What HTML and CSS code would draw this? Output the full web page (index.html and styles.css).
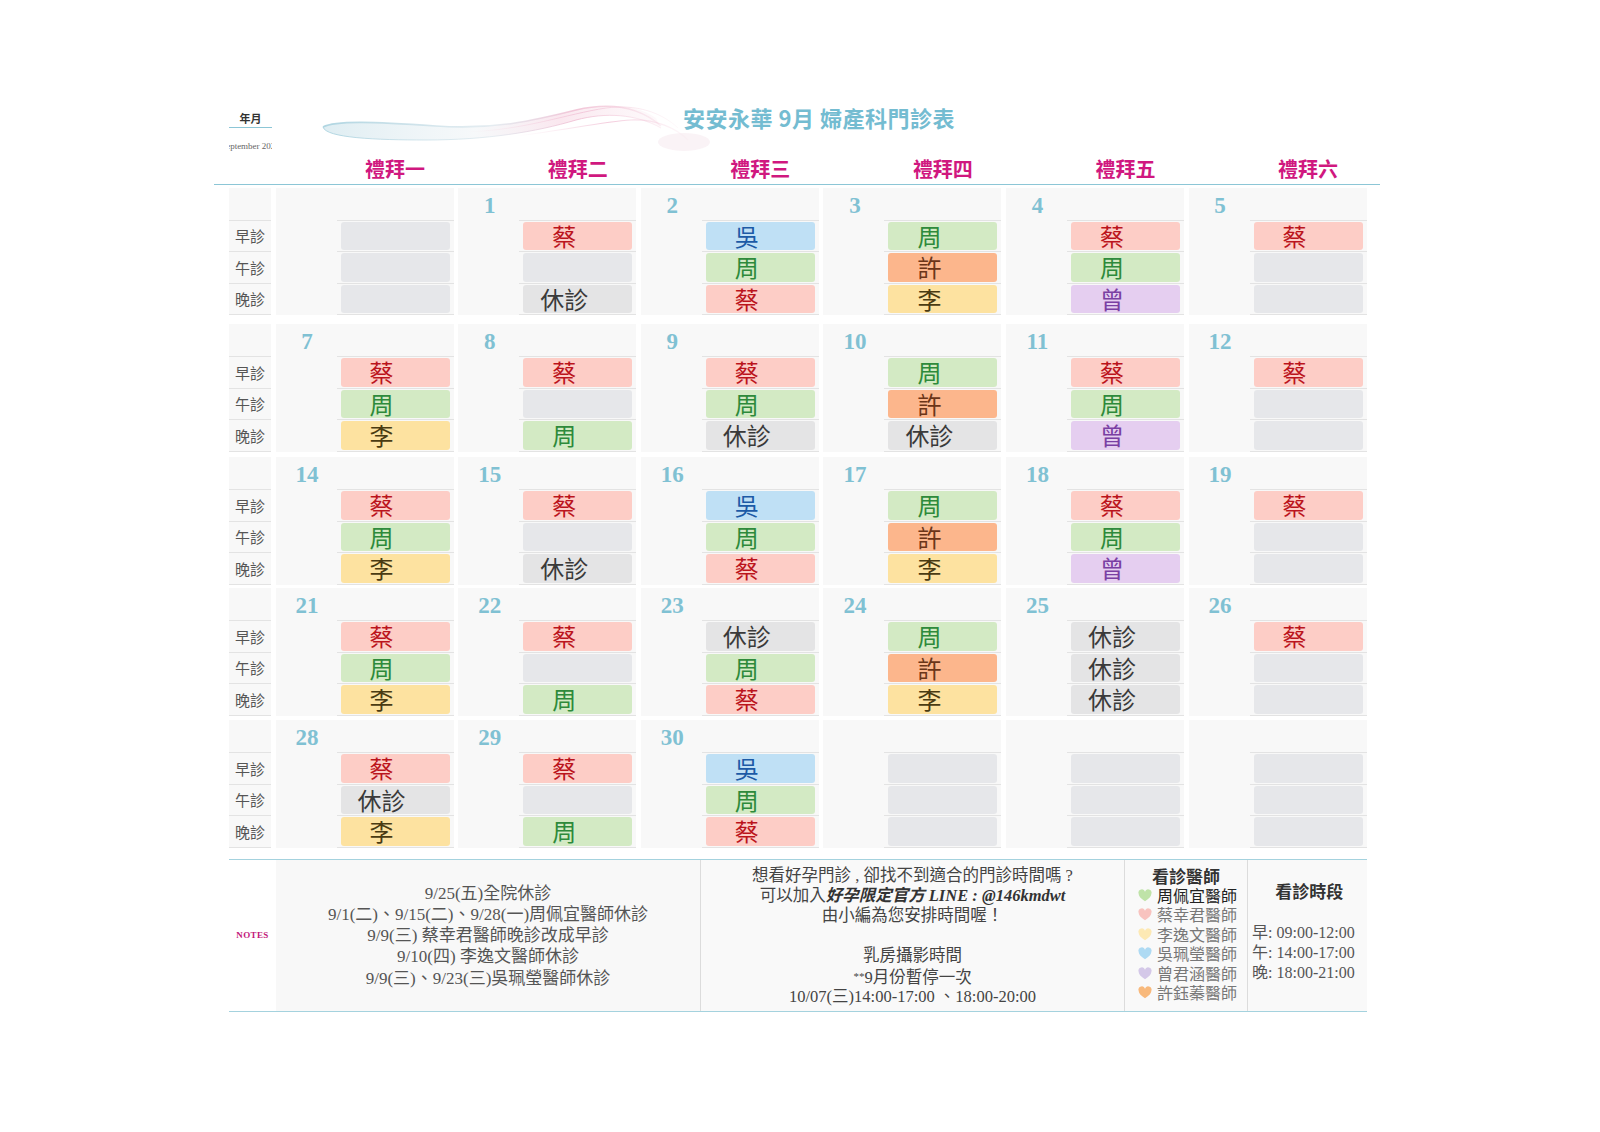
FILE: index.html
```html
<!DOCTYPE html>
<html lang="zh-Hant">
<head>
<meta charset="utf-8">
<title>安安永華 9月 婦產科門診表</title>
<link rel="stylesheet" href="styles.css">
</head>
<body>
<div class="sheet">
  <div class="top">
    <svg class="swoosh" viewBox="0 0 400 60" width="400" height="60" aria-hidden="true">
      <defs>
        <linearGradient id="gf" x1="0" x2="1" y1="0" y2="0">
          <stop offset="0" stop-color="#c4dfe8" stop-opacity="0.55"/>
          <stop offset="0.45" stop-color="#e6edf1" stop-opacity="0.35"/>
          <stop offset="0.7" stop-color="#f4cadb" stop-opacity="0.45"/>
          <stop offset="1" stop-color="#f6dbe6" stop-opacity="0.15"/>
        </linearGradient>
        <linearGradient id="gt" x1="0" x2="1" y1="0" y2="0">
          <stop offset="0" stop-color="#a9d2df" stop-opacity="0.9"/>
          <stop offset="0.5" stop-color="#dbe6ec" stop-opacity="0.7"/>
          <stop offset="0.75" stop-color="#efb9cf" stop-opacity="0.8"/>
          <stop offset="1" stop-color="#f3cfdd" stop-opacity="0.3"/>
        </linearGradient>
        <linearGradient id="gp" x1="0" x2="1" y1="0" y2="0">
          <stop offset="0" stop-color="#f6d7e3" stop-opacity="0"/>
          <stop offset="0.55" stop-color="#f0bcd2" stop-opacity="0.75"/>
          <stop offset="1" stop-color="#f6d7e3" stop-opacity="0.15"/>
        </linearGradient>
      </defs>
      <path d="M7 29 C20 22 60 24 120 28 C180 32 220 22 260 12 C290 5 320 6 340 20 L345 30 C320 16 290 14 260 22 C220 34 170 42 110 42 C60 42 10 40 7 29 Z" fill="url(#gf)"/>
      <path d="M7 29 C20 22 60 24 120 28 C180 32 220 22 260 12 C290 5 320 6 345 28" fill="none" stroke="url(#gt)" stroke-width="1.6"/>
      <path d="M7 29 C10 40 60 42 110 42 C170 42 220 34 260 22 C290 14 320 16 345 30" fill="none" stroke="url(#gt)" stroke-width="1"/>
      <path d="M150 34 C210 32 250 16 290 10 C320 6 345 14 362 30" fill="none" stroke="url(#gp)" stroke-width="1"/>
      <path d="M200 38 C250 32 285 24 315 22 C340 21 360 30 372 42" fill="none" stroke="url(#gp)" stroke-width="1.2"/>
      <ellipse cx="368" cy="44" rx="26" ry="9" fill="#f4e4ec" fill-opacity="0.45"/>
    </svg>
    <div class="ym">
      <div class="ym-title">年月</div>
      <div class="ym-sub"><span>September 2020</span></div>
    </div>
    <div class="title">安安永華 9月 婦產科門診表</div>
  </div>

  <div class="days">
    <div></div>
    <div class="dh">禮拜一</div>
    <div class="dh">禮拜二</div>
    <div class="dh">禮拜三</div>
    <div class="dh">禮拜四</div>
    <div class="dh">禮拜五</div>
    <div class="dh">禮拜六</div>
  </div>

  <div class="cal">
    <!-- week 1 -->
    <div class="week">
      <div class="lab"><div class="lab-top"></div><div class="ls">早診</div><div class="ls">午診</div><div class="ls">晚診</div></div>
      <div class="day"><div class="num"></div><div class="slots"><div class="s"><div class="b e"></div></div><div class="s"><div class="b e"></div></div><div class="s"><div class="b e"></div></div></div></div>
      <div class="day"><div class="num">1</div><div class="slots"><div class="s"><div class="b c">蔡</div></div><div class="s"><div class="b e"></div></div><div class="s"><div class="b o">休診</div></div></div></div>
      <div class="day"><div class="num">2</div><div class="slots"><div class="s"><div class="b w">吳</div></div><div class="s"><div class="b z">周</div></div><div class="s"><div class="b c">蔡</div></div></div></div>
      <div class="day"><div class="num">3</div><div class="slots"><div class="s"><div class="b z">周</div></div><div class="s"><div class="b x">許</div></div><div class="s"><div class="b l">李</div></div></div></div>
      <div class="day"><div class="num">4</div><div class="slots"><div class="s"><div class="b c">蔡</div></div><div class="s"><div class="b z">周</div></div><div class="s"><div class="b g">曾</div></div></div></div>
      <div class="day"><div class="num">5</div><div class="slots"><div class="s"><div class="b c">蔡</div></div><div class="s"><div class="b e"></div></div><div class="s"><div class="b e"></div></div></div></div>
    </div>
    <!-- week 2 -->
    <div class="week">
      <div class="lab"><div class="lab-top"></div><div class="ls">早診</div><div class="ls">午診</div><div class="ls">晚診</div></div>
      <div class="day"><div class="num">7</div><div class="slots"><div class="s"><div class="b c">蔡</div></div><div class="s"><div class="b z">周</div></div><div class="s"><div class="b l">李</div></div></div></div>
      <div class="day"><div class="num">8</div><div class="slots"><div class="s"><div class="b c">蔡</div></div><div class="s"><div class="b e"></div></div><div class="s"><div class="b z">周</div></div></div></div>
      <div class="day"><div class="num">9</div><div class="slots"><div class="s"><div class="b c">蔡</div></div><div class="s"><div class="b z">周</div></div><div class="s"><div class="b o">休診</div></div></div></div>
      <div class="day"><div class="num">10</div><div class="slots"><div class="s"><div class="b z">周</div></div><div class="s"><div class="b x">許</div></div><div class="s"><div class="b o">休診</div></div></div></div>
      <div class="day"><div class="num">11</div><div class="slots"><div class="s"><div class="b c">蔡</div></div><div class="s"><div class="b z">周</div></div><div class="s"><div class="b g">曾</div></div></div></div>
      <div class="day"><div class="num">12</div><div class="slots"><div class="s"><div class="b c">蔡</div></div><div class="s"><div class="b e"></div></div><div class="s"><div class="b e"></div></div></div></div>
    </div>
    <!-- week 3 -->
    <div class="week">
      <div class="lab"><div class="lab-top"></div><div class="ls">早診</div><div class="ls">午診</div><div class="ls">晚診</div></div>
      <div class="day"><div class="num">14</div><div class="slots"><div class="s"><div class="b c">蔡</div></div><div class="s"><div class="b z">周</div></div><div class="s"><div class="b l">李</div></div></div></div>
      <div class="day"><div class="num">15</div><div class="slots"><div class="s"><div class="b c">蔡</div></div><div class="s"><div class="b e"></div></div><div class="s"><div class="b o">休診</div></div></div></div>
      <div class="day"><div class="num">16</div><div class="slots"><div class="s"><div class="b w">吳</div></div><div class="s"><div class="b z">周</div></div><div class="s"><div class="b c">蔡</div></div></div></div>
      <div class="day"><div class="num">17</div><div class="slots"><div class="s"><div class="b z">周</div></div><div class="s"><div class="b x">許</div></div><div class="s"><div class="b l">李</div></div></div></div>
      <div class="day"><div class="num">18</div><div class="slots"><div class="s"><div class="b c">蔡</div></div><div class="s"><div class="b z">周</div></div><div class="s"><div class="b g">曾</div></div></div></div>
      <div class="day"><div class="num">19</div><div class="slots"><div class="s"><div class="b c">蔡</div></div><div class="s"><div class="b e"></div></div><div class="s"><div class="b e"></div></div></div></div>
    </div>
    <!-- week 4 -->
    <div class="week">
      <div class="lab"><div class="lab-top"></div><div class="ls">早診</div><div class="ls">午診</div><div class="ls">晚診</div></div>
      <div class="day"><div class="num">21</div><div class="slots"><div class="s"><div class="b c">蔡</div></div><div class="s"><div class="b z">周</div></div><div class="s"><div class="b l">李</div></div></div></div>
      <div class="day"><div class="num">22</div><div class="slots"><div class="s"><div class="b c">蔡</div></div><div class="s"><div class="b e"></div></div><div class="s"><div class="b z">周</div></div></div></div>
      <div class="day"><div class="num">23</div><div class="slots"><div class="s"><div class="b o">休診</div></div><div class="s"><div class="b z">周</div></div><div class="s"><div class="b c">蔡</div></div></div></div>
      <div class="day"><div class="num">24</div><div class="slots"><div class="s"><div class="b z">周</div></div><div class="s"><div class="b x">許</div></div><div class="s"><div class="b l">李</div></div></div></div>
      <div class="day"><div class="num">25</div><div class="slots"><div class="s"><div class="b o">休診</div></div><div class="s"><div class="b o">休診</div></div><div class="s"><div class="b o">休診</div></div></div></div>
      <div class="day"><div class="num">26</div><div class="slots"><div class="s"><div class="b c">蔡</div></div><div class="s"><div class="b e"></div></div><div class="s"><div class="b e"></div></div></div></div>
    </div>
    <!-- week 5 -->
    <div class="week">
      <div class="lab"><div class="lab-top"></div><div class="ls">早診</div><div class="ls">午診</div><div class="ls">晚診</div></div>
      <div class="day"><div class="num">28</div><div class="slots"><div class="s"><div class="b c">蔡</div></div><div class="s"><div class="b o">休診</div></div><div class="s"><div class="b l">李</div></div></div></div>
      <div class="day"><div class="num">29</div><div class="slots"><div class="s"><div class="b c">蔡</div></div><div class="s"><div class="b e"></div></div><div class="s"><div class="b z">周</div></div></div></div>
      <div class="day"><div class="num">30</div><div class="slots"><div class="s"><div class="b w">吳</div></div><div class="s"><div class="b z">周</div></div><div class="s"><div class="b c">蔡</div></div></div></div>
      <div class="day"><div class="num"></div><div class="slots"><div class="s"><div class="b e"></div></div><div class="s"><div class="b e"></div></div><div class="s"><div class="b e"></div></div></div></div>
      <div class="day"><div class="num"></div><div class="slots"><div class="s"><div class="b e"></div></div><div class="s"><div class="b e"></div></div><div class="s"><div class="b e"></div></div></div></div>
      <div class="day"><div class="num"></div><div class="slots"><div class="s"><div class="b e"></div></div><div class="s"><div class="b e"></div></div><div class="s"><div class="b e"></div></div></div></div>
    </div>
  </div>

  <div class="foot">
    <div class="notes-lab">NOTES</div>
    <div class="notes">
      <div>9/25(五)全院休診</div>
      <div>9/1(二)、9/15(二)、9/28(一)周佩宜醫師休診</div>
      <div>9/9(三) 蔡幸君醫師晚診改成早診</div>
      <div>9/10(四) 李逸文醫師休診</div>
      <div>9/9(三)、9/23(三)吳珮瑩醫師休診</div>
    </div>
    <div class="mid">
      <div>想看好孕門診 , 卻找不到適合的門診時間嗎 ?</div>
      <div>可以加入<b class="bi">好孕限定官方 LINE : @146kmdwt</b></div>
      <div>由小編為您安排時間喔！</div>
      <div class="blank"></div>
      <div>乳房攝影時間</div>
      <div><span class="stars">**</span>9月份暫停一次</div>
      <div class="small">10/07(三)14:00-17:00 、18:00-20:00</div>
    </div>
    <div class="docs">
      <div class="docs-title">看診醫師</div>
      <ul class="doc-list">
        <li class="first"><svg class="heart" viewBox="0 0 24 22"><path d="M12 21C5 16 1 12.5 1 7.5A5.5 5.5 0 0 1 12 4.5A5.5 5.5 0 0 1 23 7.5C23 12.5 19 16 12 21Z" fill="#bfe3a8"/></svg><span>周佩宜醫師</span></li>
        <li><svg class="heart" viewBox="0 0 24 22"><path d="M12 21C5 16 1 12.5 1 7.5A5.5 5.5 0 0 1 12 4.5A5.5 5.5 0 0 1 23 7.5C23 12.5 19 16 12 21Z" fill="#f8c3bf"/></svg><span>蔡幸君醫師</span></li>
        <li><svg class="heart" viewBox="0 0 24 22"><path d="M12 21C5 16 1 12.5 1 7.5A5.5 5.5 0 0 1 12 4.5A5.5 5.5 0 0 1 23 7.5C23 12.5 19 16 12 21Z" fill="#fde9b4"/></svg><span>李逸文醫師</span></li>
        <li><svg class="heart" viewBox="0 0 24 22"><path d="M12 21C5 16 1 12.5 1 7.5A5.5 5.5 0 0 1 12 4.5A5.5 5.5 0 0 1 23 7.5C23 12.5 19 16 12 21Z" fill="#aedaf3"/></svg><span>吳珮瑩醫師</span></li>
        <li><svg class="heart" viewBox="0 0 24 22"><path d="M12 21C5 16 1 12.5 1 7.5A5.5 5.5 0 0 1 12 4.5A5.5 5.5 0 0 1 23 7.5C23 12.5 19 16 12 21Z" fill="#d4c8e8"/></svg><span>曾君涵醫師</span></li>
        <li><svg class="heart" viewBox="0 0 24 22"><path d="M12 21C5 16 1 12.5 1 7.5A5.5 5.5 0 0 1 12 4.5A5.5 5.5 0 0 1 23 7.5C23 12.5 19 16 12 21Z" fill="#f8b97c"/></svg><span>許鈺蓁醫師</span></li>
      </ul>
    </div>
    <div class="hours">
      <div class="hours-title">看診時段</div>
      <div class="hl">早: 09:00-12:00</div>
      <div class="hl">午: 14:00-17:00</div>
      <div class="hl">晚: 18:00-21:00</div>
    </div>
  </div>
</div>
</body>
</html>
```

FILE: styles.css
```css
* { box-sizing: border-box; }

body {
  margin: 0;
  background: #ffffff;
  font-family: "Noto Sans CJK TC", "Noto Sans", sans-serif;
  color: #333;
}

.sheet {
  width: 1166px;
  margin-left: 214px;
  padding-top: 110px;
}

/* ---------- header ---------- */
.top {
  position: relative;
  display: flex;
  height: 45px;
  padding-left: 15px;
  padding-right: 14px;
}

.swoosh {
  position: absolute;
  left: 102px;
  top: -12px;
  width: 400px;
  height: 60px;
}

.ym {
  width: 43px;
  position: relative;
}

.ym-title {
  font-size: 11px;
  font-weight: 700;
  line-height: 17px;
  text-align: center;
  color: #333;
  border-bottom: 1.5px solid #8cc6d6;
}

.ym-sub {
  margin-top: 12px;
  display: flex;
  justify-content: center;
  overflow: hidden;
  white-space: nowrap;
  font: 9px/12px "Liberation Serif", serif;
  color: #666;
}

.title {
  position: relative;
  flex: 1;
  margin-top: -4px;
  align-self: flex-start;
  text-align: center;
  font-size: 22px;
  font-weight: 700;
  line-height: 22px;
  letter-spacing: 0.5px;
  color: #74bcd1;
}

/* ---------- day header ---------- */
.days {
  display: grid;
  grid-template-columns: 42px repeat(6, 178px);
  column-gap: 4.6px;
  padding-left: 15px;
  height: 29.5px;
  border-bottom: 1.5px solid #8cc6d6;
}

.dh {
  padding-left: 65px;
  padding-right: 4px;
  text-align: center;
  font-size: 20px;
  font-weight: 700;
  line-height: 28px;
  color: #d0187f;
}

/* ---------- calendar ---------- */
.cal {
  padding-left: 15px;
  margin-top: 3px;
}

.week {
  display: grid;
  grid-template-columns: 42px repeat(6, 178px);
  column-gap: 4.6px;
  margin-top: 4.5px;
}
.week:first-child { margin-top: 0; }
.week:nth-child(2) { margin-top: 9px; }
.week:nth-child(3) { margin-top: 5.5px; }
.week:nth-child(4) { margin-top: 3.5px; }

.lab,
.day {
  background: #f8f8f8;
}

.lab-top { height: 32px; }

.ls {
  height: 31.5px;
  border-top: 1px solid #e3e3e3;
  display: flex;
  align-items: center;
  justify-content: center;
  font-size: 15px;
  color: #555;
}
.ls:last-child {
  height: 32.5px;
  border-bottom: 1px solid #e3e3e3;
}

.num {
  height: 32px;
  width: 63px;
  padding-top: 5px;
  text-align: center;
  font: 700 23px/26px "Liberation Serif", "DejaVu Serif", serif;
  color: #80c1d3;
}

.slots { margin-left: 61px; }

.s {
  height: 31.5px;
  border-top: 1px solid #e3e3e3;
  padding: 1px 4px 1px 4px;
}
.s:last-child {
  height: 32.5px;
  border-bottom: 1px solid #e3e3e3;
}

.b {
  height: 100%;
  border-radius: 3px;
  display: flex;
  align-items: center;
  justify-content: center;
  padding-right: 27px;
  font-size: 24px;
  line-height: 1;
}

.b.c { background: #fdcdc6; color: #bb141c; }
.b.z { background: #d3eac4; color: #2e8a3b; }
.b.w { background: #bfe0f5; color: #1c5aa6; }
.b.x { background: #fcb68c; color: #6b3518; }
.b.l { background: #fde2a0; color: #4a3b12; }
.b.g { background: #e5cef0; color: #7a3fa3; }
.b.o { background: #e4e4e5; color: #3a3a3a; }
.b.e { background: #e6e7ea; }

/* ---------- footer ---------- */
.foot {
  margin-left: 15px;
  margin-top: 11px;
  width: 1137.6px;
  height: 153px;
  display: grid;
  grid-template-columns: 47px 424px 424px 123px 1fr;
  border-top: 1.5px solid #a4d2de;
  border-bottom: 1.5px solid #a4d2de;
}

.notes-lab {
  display: flex;
  align-items: center;
  justify-content: center;
  font: 700 9px/1 "Liberation Serif", serif;
  letter-spacing: 0.4px;
  color: #c2187a;
}

.notes {
  background: #f8f8f8;
  padding-top: 23px;
  text-align: center;
  font: 17px/21.3px "Liberation Serif", "Noto Sans CJK TC", serif;
  color: #555;
}

.mid {
  background: #f9f9f9;
  border-left: 1px solid #dcdcdc;
  padding-top: 6px;
  text-align: center;
  font: 16.5px/20px "Liberation Serif", "Noto Sans CJK TC", serif;
  color: #444;
}

.mid .bi {
  font-weight: 700;
  font-style: italic;
  color: #333;
}

.mid .blank { height: 20px; }

.mid .stars {
  font-size: 11px;
  vertical-align: 3px;
}

.mid .small {
  font-size: 16.5px;
  line-height: 18px;
}

.docs {
  background: #f9f9f9;
  border-left: 1px solid #dcdcdc;
  padding-top: 6px;
}

.docs-title {
  text-align: center;
  font-size: 17px;
  font-weight: 700;
  line-height: 20px;
  color: #333;
}

.doc-list {
  list-style: none;
  margin: 0;
  padding: 0 0 0 13px;
}

.doc-list li {
  display: flex;
  align-items: center;
  height: 19.5px;
  font-size: 16px;
  line-height: 19.5px;
  color: #777;
  white-space: nowrap;
}

.doc-list li.first { color: #222; }

.heart {
  width: 14px;
  height: 13px;
  margin-right: 5px;
  flex: none;
}

.hours {
  background: #f9f9f9;
  border-left: 1px solid #dcdcdc;
  padding-top: 21px;
  padding-left: 4px;
  white-space: nowrap;
}

.hours-title {
  text-align: center;
  font-size: 17px;
  font-weight: 700;
  line-height: 20px;
  color: #333;
  margin-bottom: 22px;
}

.hl {
  font: 16px/20.4px "Liberation Serif", "Noto Sans CJK TC", serif;
  color: #555;
}
```
